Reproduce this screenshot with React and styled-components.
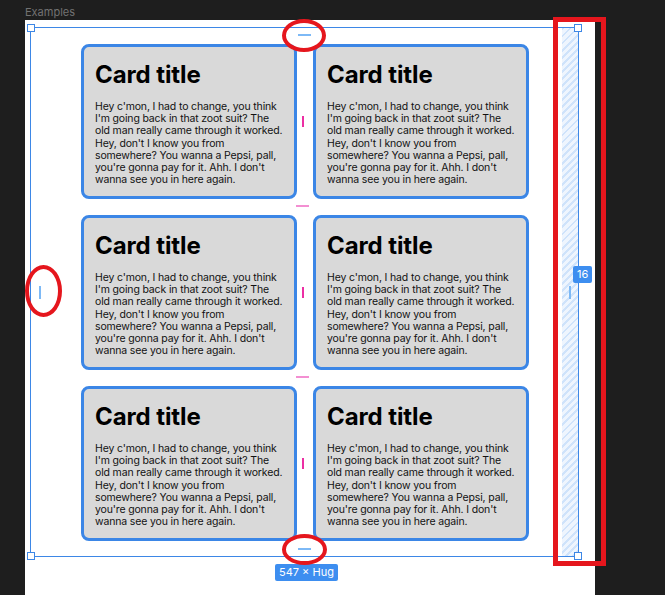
import React from "react";
import styled, { createGlobalStyle } from "styled-components";

const GlobalStyle = createGlobalStyle`
  html, body {
    margin: 0;
    padding: 0;
    background: #1e1e1e;
  }
  * {
    box-sizing: border-box;
  }
`;

const Canvas = styled.div`
  position: relative;
  width: 665px;
  height: 595px;
  overflow: hidden;
  background: #1e1e1e;
  font-family: Inter, "Noto Sans", sans-serif;
  display: flex;
  flex-direction: column;
  padding-left: 25px;
`;

const FrameLabel = styled.div`
  height: 20px;
  padding-top: 6px;
  font-size: 11px;
  line-height: 13px;
  color: #727272;
`;

const Frame = styled.div`
  position: relative;
  width: 570px;
  flex: 1;
  background: #ffffff;
  padding: 7px 0 0 5px;
`;

// selected auto-layout frame, with the on-canvas padding markers drawn on it
const Selection = styled.div`
  position: relative;
  width: 549px;
  height: 530px;
  border: 1px solid #3d87e6;
  padding: 16px 0 0 50px;

  &::before,
  &::after {
    content: "";
    position: absolute;
    background: #7db9f6;
  }
  /* top padding marker */
  &::before {
    left: 267px;
    top: 6px;
    width: 13px;
    height: 2px;
  }
  /* left padding marker */
  &::after {
    left: 8px;
    top: 258px;
    width: 2px;
    height: 13px;
  }
`;

const PaddingHatch = styled.div`
  position: absolute;
  top: 0;
  right: 0;
  bottom: 0;
  width: 16px;
  background: repeating-linear-gradient(
    135deg,
    #cfe3fb 0px,
    #cfe3fb 2px,
    #eef5fe 2px,
    #eef5fe 5px
  );

  /* right padding marker */
  &::after {
    content: "";
    position: absolute;
    left: 7px;
    top: 258px;
    width: 2px;
    height: 13px;
    background: #7db9f6;
  }
`;

const BottomPadMark = styled.div`
  position: absolute;
  left: 267px;
  bottom: 6px;
  width: 13px;
  height: 2px;
  background: #7db9f6;
`;

const Handle = styled.div`
  position: absolute;
  width: 8px;
  height: 8px;
  background: #fff;
  border: 1px solid #3d87e6;
  ${(p) => (p.$top ? "top: -4px;" : "bottom: -4px;")}
  ${(p) => (p.$left ? "left: -4px;" : "right: -4px;")}
`;

const Grid = styled.div`
  display: grid;
  grid-template-columns: 216px 216px;
  grid-auto-rows: 155px;
  column-gap: 16px;
  row-gap: 16px;
`;

const Card = styled.div`
  position: relative;
  background: #d9d9d9;
  border: 3px solid #3b86e6;
  border-radius: 8px;
  padding: 13px 9px 0 11px;
  display: flex;
  flex-direction: column;
  gap: 12px;

  /* column gap marker */
  &:nth-child(odd)::after {
    content: "";
    position: absolute;
    right: -10px;
    top: 69px;
    width: 2px;
    height: 11px;
    background: #ec2fa4;
  }
  /* row gap marker */
  &:nth-child(1)::before,
  &:nth-child(3)::before {
    content: "";
    position: absolute;
    right: -15px;
    bottom: -11px;
    width: 13px;
    height: 2px;
    background: #f38fd2;
  }
`;

const CardTitle = styled.h2`
  margin: 0;
  font-size: 24px;
  line-height: 29px;
  font-weight: 700;
  color: #000;
  letter-spacing: -0.1px;
`;

const CardText = styled.p`
  margin: 0;
  font-size: 10.5px;
  line-height: 12.2px;
  letter-spacing: -0.15px;
  color: #111;
`;

const Badge = styled.div`
  position: absolute;
  left: ${(p) => p.$x}px;
  top: ${(p) => p.$y}px;
  height: 17px;
  padding: 0 4px;
  border-radius: 2px;
  background: #3d8ef0;
  color: #fff;
  font-size: 11px;
  line-height: 17px;
  white-space: nowrap;
`;

const RedEllipse = styled.div`
  position: absolute;
  left: ${(p) => p.$x}px;
  top: ${(p) => p.$y}px;
  width: ${(p) => p.$w}px;
  height: ${(p) => p.$h}px;
  border: 4px solid #e5161d;
  border-radius: 50%;
`;

const RedBox = styled.div`
  position: absolute;
  left: 553px;
  top: 17px;
  width: 53px;
  height: 549px;
  border: 5px solid #e5161d;
`;

const text =
  "Hey c'mon, I had to change, you think I'm going back in that zoot suit? The old man really came through it worked. Hey, don't I know you from somewhere? You wanna a Pepsi, pall, you're gonna pay for it. Ahh. I don't wanna see you in here again.";

const cards = [1, 2, 3, 4, 5, 6];

export default function App() {
  return (
    <>
      <GlobalStyle />
      <Canvas>
        <FrameLabel>Examples</FrameLabel>
        <Frame>
          <Selection>
            <PaddingHatch />
            <Grid>
              {cards.map((id) => (
                <Card key={id}>
                  <CardTitle>Card title</CardTitle>
                  <CardText>{text}</CardText>
                </Card>
              ))}
            </Grid>
            <BottomPadMark />
            <Handle $top $left />
            <Handle $top />
            <Handle $left />
            <Handle />
          </Selection>
        </Frame>

        <Badge $x={573} $y={266}>16</Badge>
        <Badge $x={275} $y={564}>547 × Hug</Badge>

        <RedEllipse $x={282} $y={19} $w={44} $h={33} />
        <RedEllipse $x={25} $y={265} $w={37} $h={52} />
        <RedEllipse $x={282} $y={534} $w={45} $h={31} />
        <RedBox />
      </Canvas>
    </>
  );
}
